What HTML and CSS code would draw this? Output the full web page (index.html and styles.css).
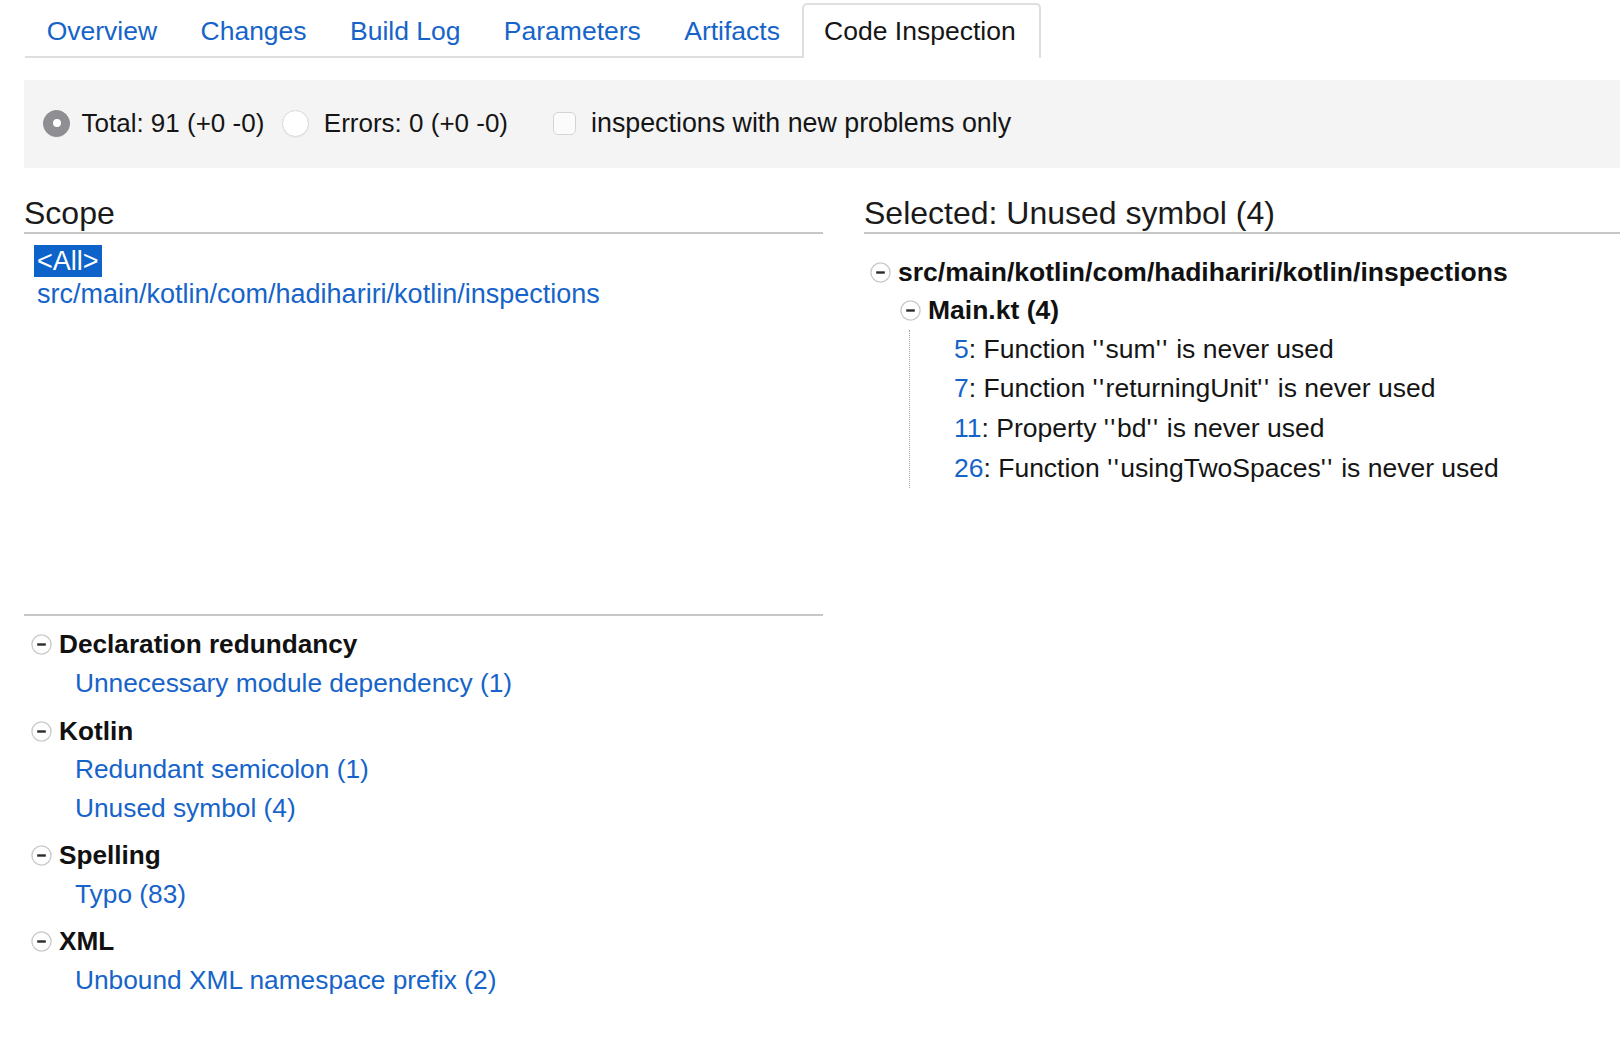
FILE: index.html
```html
<!DOCTYPE html>
<html lang="en">
<head>
<meta charset="utf-8">
<title>Code Inspection</title>
<link rel="stylesheet" href="styles.css">
</head>
<body>
<div class="page">
  <nav class="tabs">
    <a class="tab" href="#">Overview</a>
    <a class="tab" href="#">Changes</a>
    <a class="tab" href="#">Build Log</a>
    <a class="tab" href="#">Parameters</a>
    <a class="tab" href="#">Artifacts</a>
    <span class="tab active">Code Inspection</span>
  </nav>

  <div class="filter">
    <label class="opt"><span class="radio checked"></span>Total: 91 (+0 -0)</label>
    <label class="opt opt-second"><span class="radio"></span>Errors: 0 (+0 -0)</label>
    <label class="opt opt-check"><span class="checkbox"></span>inspections with new problems only</label>
  </div>

  <div class="columns">
    <section class="left">
      <h2 class="heading">Scope</h2>
      <ul class="scope">
        <li><a class="scope-link sel" href="#">&lt;All&gt;</a></li>
        <li><a class="scope-link" href="#">src/main/kotlin/com/hadihariri/kotlin/inspections</a></li>
      </ul>

      <div class="tree">
        <div class="group">
          <div class="ghead"><svg class="minus" viewBox="0 0 21 21"><circle cx="10.5" cy="10.5" r="9.6" fill="#fff" stroke="#c9c9c9" stroke-width="1.3"/><rect x="6.2" y="9.3" width="8.6" height="2.4" fill="#2b2b2b"/></svg>Declaration redundancy</div>
          <a class="leaf" href="#">Unnecessary module dependency (1)</a>
        </div>
        <div class="group">
          <div class="ghead"><svg class="minus" viewBox="0 0 21 21"><circle cx="10.5" cy="10.5" r="9.6" fill="#fff" stroke="#c9c9c9" stroke-width="1.3"/><rect x="6.2" y="9.3" width="8.6" height="2.4" fill="#2b2b2b"/></svg>Kotlin</div>
          <a class="leaf" href="#">Redundant semicolon (1)</a>
          <a class="leaf" href="#">Unused symbol (4)</a>
        </div>
        <div class="group">
          <div class="ghead"><svg class="minus" viewBox="0 0 21 21"><circle cx="10.5" cy="10.5" r="9.6" fill="#fff" stroke="#c9c9c9" stroke-width="1.3"/><rect x="6.2" y="9.3" width="8.6" height="2.4" fill="#2b2b2b"/></svg>Spelling</div>
          <a class="leaf" href="#">Typo (83)</a>
        </div>
        <div class="group">
          <div class="ghead"><svg class="minus" viewBox="0 0 21 21"><circle cx="10.5" cy="10.5" r="9.6" fill="#fff" stroke="#c9c9c9" stroke-width="1.3"/><rect x="6.2" y="9.3" width="8.6" height="2.4" fill="#2b2b2b"/></svg>XML</div>
          <a class="leaf" href="#">Unbound XML namespace prefix (2)</a>
        </div>
      </div>
    </section>

    <section class="right">
      <h2 class="heading">Selected: Unused symbol (4)</h2>
      <div class="rtree">
        <div class="node n1"><svg class="minus" viewBox="0 0 21 21"><circle cx="10.5" cy="10.5" r="9.6" fill="#fff" stroke="#c9c9c9" stroke-width="1.3"/><rect x="6.2" y="9.3" width="8.6" height="2.4" fill="#2b2b2b"/></svg>src/main/kotlin/com/hadihariri/kotlin/inspections</div>
        <div class="node n2"><svg class="minus" viewBox="0 0 21 21"><circle cx="10.5" cy="10.5" r="9.6" fill="#fff" stroke="#c9c9c9" stroke-width="1.3"/><rect x="6.2" y="9.3" width="8.6" height="2.4" fill="#2b2b2b"/></svg>Main.kt (4)</div>
        <ul class="items">
          <li><a href="#">5</a>: Function <span class="q">&#39;&#39;</span>sum<span class="q">&#39;&#39;</span> is never used</li>
          <li><a href="#">7</a>: Function <span class="q">&#39;&#39;</span>returningUnit<span class="q">&#39;&#39;</span> is never used</li>
          <li><a href="#">11</a>: Property <span class="q">&#39;&#39;</span>bd<span class="q">&#39;&#39;</span> is never used</li>
          <li><a href="#">26</a>: Function <span class="q">&#39;&#39;</span>usingTwoSpaces<span class="q">&#39;&#39;</span> is never used</li>
        </ul>
      </div>
    </section>
  </div>
</div>
</body>
</html>
```

FILE: styles.css
```css
* { box-sizing: border-box; }

html, body {
  margin: 0;
  padding: 0;
  background: #ffffff;
}

body {
  font-family: "Liberation Sans", Arial, Helvetica, sans-serif;
  color: #151515;
}

a { text-decoration: none; color: #1664c9; }

.page {
  padding-left: 24px;
  overflow: hidden;
}

/* Tabs */
.tabs {
  display: flex;
  margin: 3px 0 0 1px;
  height: 55px;
}

.tab {
  display: block;
  height: 55px;
  padding: 3px 21.7px 0;
  line-height: 50px;
  font-size: 26.5px;
  color: #1664c9;
  border-bottom: 2px solid #dedede;
  white-space: nowrap;
}

.tab.active {
  color: #151515;
  border: 2px solid #dedede;
  border-bottom: none;
  border-radius: 5px 5px 0 0;
  padding: 1px 23px 0 20.5px;
}

/* Filter bar */
.filter {
  margin-top: 22px;
  height: 88px;
  background: #f4f4f4;
  display: flex;
  align-items: center;
  padding: 0 0 2px 19px;
  font-size: 26px;
  color: #151515;
}

.opt {
  display: flex;
  align-items: center;
  white-space: nowrap;
}

.opt-second { margin-left: 18px; }
.opt-second .radio { margin-right: 14.5px; }
.opt-check { margin-left: 45px; font-size: 26.8px; }

.radio {
  position: relative;
  width: 27px;
  height: 27px;
  border-radius: 50%;
  margin-right: 11.5px;
  background: #ffffff;
  border: 1px solid #d8d8d8;
  box-shadow: 0 1px 1px rgba(0, 0, 0, 0.04);
  flex: none;
}

.radio.checked {
  background: #8e8e93;
  border-color: #8a8a8f;
}

.radio.checked::after {
  content: "";
  position: absolute;
  width: 8px;
  height: 8px;
  border-radius: 50%;
  background: #ffffff;
  left: 50%;
  top: 50%;
  transform: translate(-50%, -50%);
}

.checkbox {
  width: 23px;
  height: 23px;
  border: 1px solid #d4d4d4;
  border-radius: 5px;
  background: #fbfbfb;
  margin-right: 15px;
  flex: none;
}

/* Columns */
.columns {
  display: flex;
  gap: 41px;
}

.left {
  width: 799px;
  flex: none;
}

.right {
  flex: 1;
  min-width: 0;
}

.heading {
  margin: 27px 0 0;
  font-size: 32px;
  font-weight: normal;
  line-height: 37px;
  border-bottom: 2px solid #c6c6c6;
  color: #1a1a1a;
  white-space: nowrap;
}

/* Scope list */
.scope {
  list-style: none;
  margin: 11px 0 0 10px;
  padding: 0;
  height: 369px;
  font-size: 27px;
}

.scope li {
  height: 33px;
  line-height: 32px;
}

.scope-link {
  display: inline-block;
  padding: 0 3px;
  line-height: 32px;
  color: #1664c9;
}

.scope-link.sel {
  background: #0d63c9;
  color: #ffffff;
}

/* Inspection tree (left) */
.tree {
  border-top: 2px solid #c6c6c6;
  padding-top: 9.5px;
}

.group + .group { margin-top: 9.5px; }

.ghead {
  display: flex;
  align-items: center;
  height: 38.5px;
  font-weight: bold;
  font-size: 26.2px;
  padding-left: 7px;
  color: #111111;
}

.minus {
  width: 21px;
  height: 21px;
  margin-right: 7px;
  flex: none;
}

.leaf {
  display: block;
  line-height: 38.3px;
  padding-left: 51px;
  font-size: 26.3px;
  color: #1664c9;
}

/* Selected tree (right) */
.rtree {
  margin-top: 19.5px;
  font-size: 26.5px;
}

.node {
  display: flex;
  align-items: center;
  height: 38px;
  font-weight: bold;
  color: #111111;
  white-space: nowrap;
}

.n1 { padding-left: 6px; }
.n2 { padding-left: 36px; }

.items {
  list-style: none;
  margin: 0 0 0 45px;
  padding: 0 0 0 44px;
  border-left: 1px dotted #a8a8a8;
}

.items li {
  line-height: 39.7px;
  white-space: nowrap;
}

.items a { color: #1664c9; }

.q { letter-spacing: 1.5px; }
```
